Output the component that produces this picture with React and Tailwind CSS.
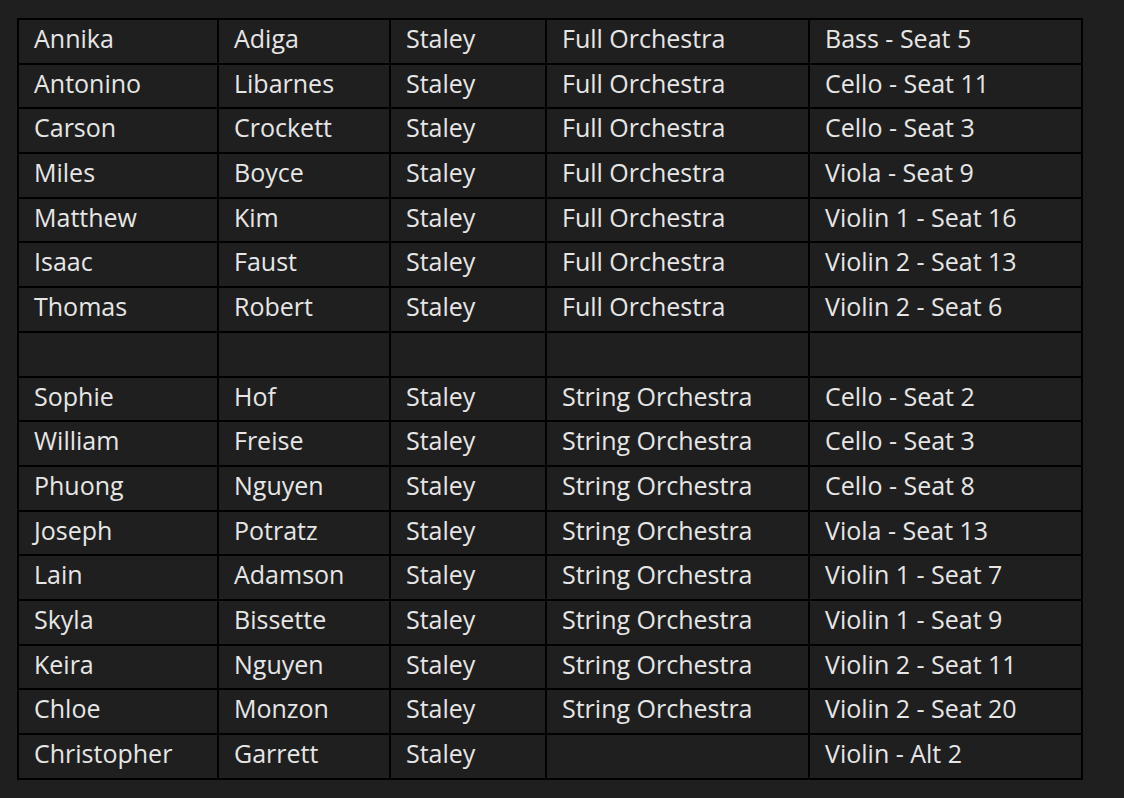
import React from "react";

const rows = [
  ["Annika", "Adiga", "Staley", "Full Orchestra", "Bass - Seat 5"],
  ["Antonino", "Libarnes", "Staley", "Full Orchestra", "Cello - Seat 11"],
  ["Carson", "Crockett", "Staley", "Full Orchestra", "Cello - Seat 3"],
  ["Miles", "Boyce", "Staley", "Full Orchestra", "Viola - Seat 9"],
  ["Matthew", "Kim", "Staley", "Full Orchestra", "Violin 1 - Seat 16"],
  ["Isaac", "Faust", "Staley", "Full Orchestra", "Violin 2 - Seat 13"],
  ["Thomas", "Robert", "Staley", "Full Orchestra", "Violin 2 - Seat 6"],
  ["", "", "", "", ""],
  ["Sophie", "Hof", "Staley", "String Orchestra", "Cello - Seat 2"],
  ["William", "Freise", "Staley", "String Orchestra", "Cello - Seat 3"],
  ["Phuong", "Nguyen", "Staley", "String Orchestra", "Cello - Seat 8"],
  ["Joseph", "Potratz", "Staley", "String Orchestra", "Viola - Seat 13"],
  ["Lain", "Adamson", "Staley", "String Orchestra", "Violin 1 - Seat 7"],
  ["Skyla", "Bissette", "Staley", "String Orchestra", "Violin 1 - Seat 9"],
  ["Keira", "Nguyen", "Staley", "String Orchestra", "Violin 2 - Seat 11"],
  ["Chloe", "Monzon", "Staley", "String Orchestra", "Violin 2 - Seat 20"],
  ["Christopher", "Garrett", "Staley", "", "Violin - Alt 2"],
];

const widths = ["w-[200px]", "w-[172px]", "w-[156px]", "w-[263px]", "w-[273px]"];

export default function App() {
  return (
    <div className="min-h-[798px] w-full bg-[#1f1f1f] pt-[18px] pl-[17px] font-['Open_Sans',sans-serif] text-[25px] font-medium text-[#e6e6e6]">
      <table className="table-fixed border-collapse border-2 border-black">
        <colgroup>
          {widths.map((w, i) => (
            <col key={i} className={w} />
          ))}
        </colgroup>
        <tbody>
          {rows.map((row, i) => (
            <tr key={i} className="h-[44.7px]">
              {row.map((cell, j) => (
                <td
                  key={j}
                  className="border-2 border-black pl-[15px] pr-[10px] pt-[3px] align-top leading-[30px] whitespace-nowrap"
                >
                  {cell}
                </td>
              ))}
            </tr>
          ))}
        </tbody>
      </table>
    </div>
  );
}
